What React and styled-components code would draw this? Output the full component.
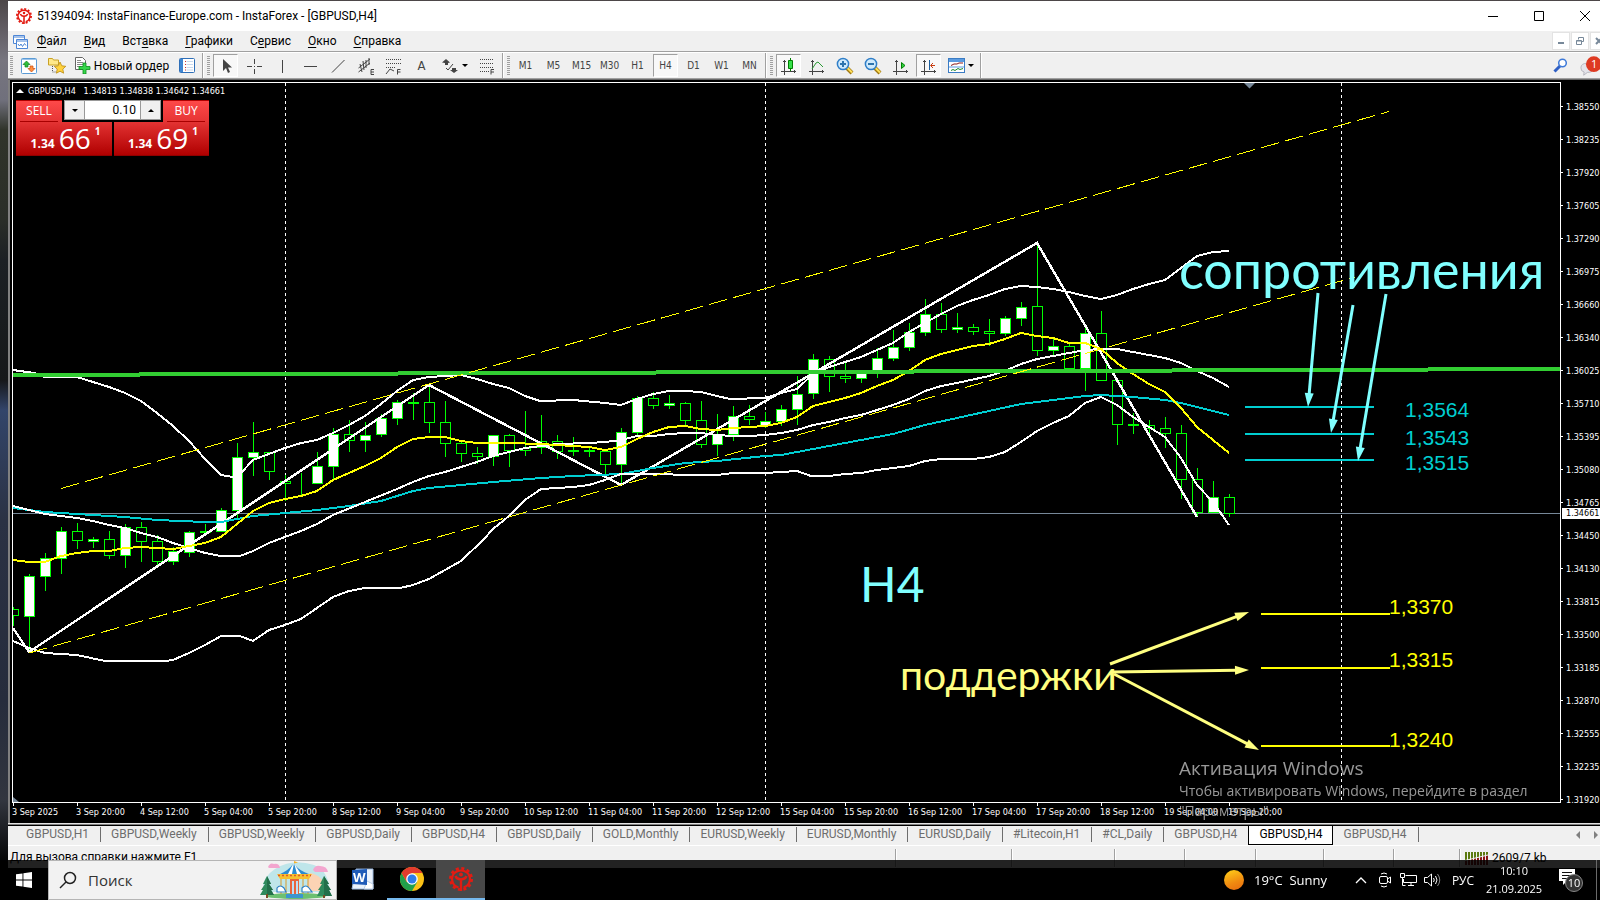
import React, { useState } from 'react';
import styled, { createGlobalStyle, css } from 'styled-components';

const windowFont = "Roboto, 'Noto Sans', sans-serif";
const uiFont = "'Open Sans', 'Noto Sans', sans-serif";
const chartFont = "'DejaVu Sans Condensed', 'DejaVu Sans', sans-serif";

const colors = {
  face: '#f0f0f0',
  shadow: '#a0a0a0',
  candle: '#00ff00',
  cyan: '#00ced1',
  yellow: '#ffff00',
  note: '#80ffff',
  noteYellow: '#ffff80',
  grey: '#778899',
};

const GlobalStyle = createGlobalStyle`
  * {
    box-sizing: border-box;
  }

  body {
    margin: 0;
    background: #000;
    font-family: ${uiFont};
    font-size: 12px;
  }

  button, input {
    font-family: inherit;
    font-size: inherit;
  }
`;

const Desktop = styled.div`
  height: 100vh;
  overflow: hidden;
  padding: 1px 0 32px 8px;
  background: linear-gradient(
    #4c4648 0, #77757f 60px, #70707c 100px, #30342a 130px, #2a2e28 220px, #1c2024 260px,
    #16181a 380px, #33456a 410px, #2b3244 520px, #262c3c 700px, #32363f 800px, #000 868px
  );
`;

const Window = styled.div`
  display: flex;
  flex-direction: column;
  height: 100%;
  margin-right: -8px;
  background: ${colors.face};
  font-family: ${windowFont};
`;

const TitleBar = styled.header`
  display: flex;
  align-items: center;
  height: 30px;
  padding-left: 8px;
  gap: 5px;
  background: #fff;
`;

const Title = styled.h1`
  flex: 1;
  margin: 0;
  font-size: 12px;
  font-weight: 400;
  color: #000;
`;

const WindowButtons = styled.div`
  display: flex;
`;

const WindowButton = styled.button`
  display: flex;
  align-items: center;
  justify-content: center;
  width: 46px;
  height: 28px;
  padding: 0;
  border: none;
  background: transparent;
`;

const MenuBar = styled.nav`
  display: flex;
  align-items: center;
  height: 22px;
  padding: 0 0 1px 5px;
  border-bottom: 1px solid #fff;
  box-shadow: inset 0 -1px 0 ${colors.shadow};
`;

const MenuItem = styled.button`
  height: 18px;
  padding: 0 8px 0 9px;
  border: none;
  background: transparent;
  font-size: 12px;
  line-height: 16px;
  color: #000;

  u {
    text-underline-offset: 2px;
  }
`;

const MdiButtons = styled.div`
  display: flex;
  gap: 1px;
  margin-left: auto;
`;

const MdiButton = styled.button`
  display: flex;
  align-items: center;
  justify-content: center;
  width: 18px;
  height: 18px;
  padding: 0;
  border: 1px solid #e3e3e3;
  background: #fff;
`;

const ToolBar = styled.div`
  display: flex;
  gap: 3px;
  height: 27px;
  padding-left: 2px;
  border-bottom: 1px solid #696969;
  box-shadow: inset 0 -1px 0 ${colors.shadow};
`;

const Grip = styled.span`
  width: 3px;
  height: 19px;
  margin-top: 3px;
  background: repeating-linear-gradient(${colors.shadow} 0 1px, transparent 1px 2px);
`;

const Separator = styled.span`
  width: 2px;
  height: 25px;
  border-left: 1px solid ${colors.shadow};
  border-right: 1px solid #fff;
`;

const ToolButton = styled.button`
  display: flex;
  align-items: center;
  justify-content: center;
  gap: 3px;
  width: ${props => props.$width || 25}px;
  height: 23px;
  margin-top: 1px;
  padding: 0;
  border: 1px solid transparent;
  background: transparent;
  color: #000;
  white-space: nowrap;

  ${props => props.$pressed && css`
    border-color: ${colors.shadow} #fff #fff ${colors.shadow};
    background: #f8f8f8;
  `}
`;

const PeriodButton = styled(ToolButton)`
  font-family: ${chartFont};
  font-size: 10px;
  color: #444;
`;

const ToolBarEnd = styled.div`
  display: flex;
  gap: 6px;
  margin-left: auto;
  padding-right: 4px;
`;

const Chart = styled.main`
  position: relative;
  display: grid;
  grid-template-columns: 1fr 47px;
  grid-template-rows: 1fr 20px;
  flex: 1;
  min-height: 0;
  padding: 2px 0 0 2px;
  border-left: 2px solid #808080;
  background: #000;
  font-family: ${chartFont};
  font-size: 9px;
  color: #fff;
`;

const Plot = styled.div`
  min-width: 0;
  min-height: 0;
  border: 1px solid #fff;

  svg {
    display: block;
    width: 100%;
    height: 100%;
  }
`;

const PriceAxis = styled.ol`
  position: relative;
  grid-row: span 2;
  margin: 0;
  padding: 8px 0 0;
  list-style: none;
`;

const Price = styled.li`
  display: flex;
  align-items: center;
  gap: 3px;
  height: 33px;

  &::before {
    content: '';
    width: 2px;
    height: 1px;
    background: #fff;
  }
`;

const LastPrice = styled.div`
  position: absolute;
  top: 426px;
  left: 1px;
  right: 0;
  padding-left: 4px;
  background: #fff;
  line-height: 11px;
  color: #000;
`;

const TimeAxis = styled.ol`
  display: flex;
  margin: 0;
  padding: 0;
  list-style: none;
`;

const Time = styled.li`
  flex: 0 0 64px;
  line-height: 12px;
  white-space: nowrap;

  &::before {
    content: '';
    display: block;
    width: 1px;
    height: 3px;
    margin-left: 1px;
    background: #fff;
  }
`;

const Quote = styled.div`
  position: absolute;
  top: 5px;
  left: 6px;
  display: flex;
  align-items: center;
  gap: 4px;
  line-height: 12px;
  white-space: pre;
`;

const TradePanel = styled.section`
  position: absolute;
  top: 20px;
  left: 6px;
  display: grid;
  grid-template-columns: 96px 95px;
  gap: 2px;
  font-family: ${uiFont};
`;

const TradeButton = styled.button`
  display: flex;
  flex-direction: column;
  align-items: ${props => (props.$side === 'buy' ? 'flex-end' : 'flex-start')};
  padding: 0;
  border: none;
  background: transparent;
  color: #fff;
`;

const TradeName = styled.span`
  width: 46px;
  height: 22px;
  padding: 0 4px;
  background: linear-gradient(#ff4a4a, #e53434);
  box-shadow: inset 0 1px 0 #b00000;
  font-size: 12px;
  line-height: 21px;

  &::after {
    content: '';
    display: block;
    height: 2px;
    border-top: 1px solid #a80000;
    background: #ff9a9a;
  }
`;

const TradePrice = styled.span`
  display: flex;
  align-items: flex-end;
  justify-content: center;
  gap: 4px;
  width: 100%;
  height: 34px;
  padding: 0 0 4px 3px;
  background: linear-gradient(#e33333, #b00000);
  border-bottom: 1px solid #900000;
  font-size: 12px;
  font-weight: 700;
  line-height: 14px;

  big {
    font-size: 28px;
    font-weight: 400;
    line-height: 25px;
  }

  sup {
    align-self: flex-start;
    margin-top: 2px;
    vertical-align: baseline;
  }
`;

const Volume = styled.div`
  position: absolute;
  top: 0;
  left: 48px;
  display: flex;
  width: 97px;
  height: 20px;
  border: 1px solid #999;
  background: #999;
  gap: 1px;
`;

const VolumeInput = styled.input`
  flex: 1;
  min-width: 0;
  padding: 0 4px 0 0;
  border: none;
  background: #fff;
  font-family: ${windowFont};
  font-size: 12px;
  text-align: right;
  color: #000;
`;

const SpinButton = styled.button`
  width: 19px;
  padding: 0 0 4px;
  border: none;
  background: ${colors.face};
`;

const Caret = styled.span`
  display: inline-block;
  border: ${props => props.$size || 3}px solid transparent;
  ${props => (props.$up ? 'border-top-width: 0; border-bottom-color' : 'border-bottom-width: 0; border-top-color')}: ${props => props.$color || '#000'};
`;

const TabBar = styled.div`
  display: flex;
  height: 23px;
  padding-left: 8px;
  border-top: 1px solid #e3e3e3;
  border-bottom: 1px solid #fff;
  box-shadow: inset 0 1px 0 #808080, inset 0 2px 0 #000;
`;

const Tab = styled.button`
  height: 15px;
  margin-top: 3px;
  padding: 0 11px 0 10px;
  border: solid #6d6d6d;
  border-width: 0 1px 0 0;
  background: transparent;
  font-size: 12px;
  line-height: 15px;
  color: #6d6d6d;
  white-space: nowrap;

  ${props => props.$active && css`
    height: 19px;
    margin: 2px 0 0 -1px;
    padding: 0 10px 2px;
    border: 1px solid #000;
    border-top: none;
    background: #fff;
    color: #000;
  `}
`;

const TabScroll = styled.div`
  display: flex;
  align-items: center;
  gap: 14px;
  margin-left: auto;
  padding-right: 9px;
`;

const StatusBar = styled.footer`
  display: flex;
  height: 22px;
  padding-left: 2px;
  font-size: 12px;
  line-height: 22px;
  color: #000;
`;

const StatusText = styled.span`
  flex: 1;
`;

const StatusCell = styled.span`
  display: flex;
  align-items: center;
  gap: 4px;
  width: ${props => props.$width}px;
  height: 18px;
  margin-top: 3px;
  padding-left: 5px;
  border-left: 1px solid ${colors.shadow};
  box-shadow: inset 1px 0 0 #fff;
`;

const Activation = styled.aside`
  position: fixed;
  right: 41px;
  bottom: 79px;
  width: 380px;
  font-size: 14px;
  line-height: 20px;
  color: rgba(190, 190, 190, 0.8);
  white-space: nowrap;
  pointer-events: none;

  h2 {
    margin: 0 0 1px;
    font-size: 19px;
    font-weight: 400;
    line-height: 24px;
  }

  p {
    margin: 0;
  }
`;

const TaskBar = styled.div`
  position: fixed;
  right: 0;
  bottom: 0;
  left: 0;
  display: flex;
  height: 40px;
  background: rgba(0, 0, 0, 0.86);
  color: #fff;
`;

const StartButton = styled.button`
  width: 48px;
  padding: 0;
  border: none;
  background: transparent;
  line-height: 0;
`;

const Search = styled.label`
  display: flex;
  align-items: center;
  width: 289px;
  padding: 0 2px 0 10px;
  border: 1px solid #b5b5b5;
  background: #f2f2f2;
`;

const SearchInput = styled.input`
  flex: 1;
  min-width: 0;
  padding: 0 0 0 11px;
  border: none;
  background: transparent;
  font-size: 15px;

  &::placeholder {
    color: #333;
    opacity: 1;
  }
`;

const TaskButton = styled.button`
  display: flex;
  align-items: center;
  justify-content: center;
  width: 49px;
  padding: 0;
  border: none;
  border-bottom: 2px solid ${props => (props.$running ? '#76b9ed' : 'transparent')};
  background: ${props => (props.$active ? '#484848' : 'transparent')};
`;

const TaskButtons = styled.div`
  display: flex;
  padding-left: 1px;
`;

const Tray = styled.div`
  display: grid;
  grid-template-columns: 132px 26px 22px 24px 24px 38px 64px 50px 4px;
  align-items: center;
  justify-items: center;
  margin-left: auto;
  font-size: 12px;
`;

const Weather = styled.div`
  display: flex;
  align-items: center;
  justify-self: start;
  gap: 10px;
  padding-left: 8px;
  font-size: 13px;
  white-space: pre;
`;

const Sun = styled.span`
  width: 20px;
  height: 20px;
  border-radius: 50%;
  background: linear-gradient(160deg, #ffd21a, #f08a10 60%, #e86a10);
`;

const Clock = styled.time`
  font-size: 11px;
  line-height: 18px;
  text-align: center;
`;

const ShowDesktop = styled.span`
  justify-self: stretch;
  height: 40px;
  border-left: 1px solid #6a6a6a;
`;

const InstaLogo = ({ size }) => (
  <svg width={size} height={size} viewBox="0 0 24 24" fill="none" stroke="#e31b12">
    <circle cx="12" cy="12" r="10.6" strokeWidth="2.8" strokeDasharray="3 2.55" />
    <path d="M9.500 20.500A8.800 8.800 0 0 1 6 5.500Q12 1.500 18 5.500A8.800 8.800 0 0 1 14.500 20.500" strokeWidth="2.2" />
    <circle cx="12" cy="7.500" r="1.900" fill="#e31b12" stroke="none" />
    <path d="M6.500 9Q7.500 12 12 12.500 16.500 12 17.500 9M12 11.500V24" strokeWidth="2.400" />
  </svg>
);

const MdiIcon = () => (
  <svg width="15" height="15" viewBox="0 0 15 15" fill="#fff" stroke="#4d86d6">
    <path d="M.5 1.500h11v8h-11zM.500 3h11" />
    <path d="M3.500 5.500h11v9h-11zM3.500 7h11" />
    <path d="M5 10l1.500 2 1.500-2 1.500 2.500 2-3 1.500 2" fill="none" />
  </svg>
);

const MarketIcon = () => (
  <svg width="16" height="16" viewBox="0 0 16 16">
    <rect x=".5" y=".5" width="15" height="15" rx="1" fill="#fff" stroke="#5b9bd5" />
    <path d="M1 1.500h14" stroke="#9cc4ec" />
    <path d="M5.500 3L9 6.500H7V9H4V6.500H2z" fill="#2fbf3a" stroke="#13801c" strokeWidth=".7" />
    <path d="M10.500 14L7 10.500h2V8h3v2.500h2z" fill="#ff9040" stroke="#c84b10" strokeWidth=".7" />
  </svg>
);

const FavoritesIcon = () => (
  <svg width="18" height="17" viewBox="0 0 18 17">
    <path d="M.5 1.500h4l1 1.500h5v5h-10z" fill="#ffe88a" stroke="#c9a227" />
    <path d="M4.500 9v6h4" stroke="#555" fill="none" strokeDasharray="1 1" />
    <path d="M12 5l1.800 3.800 4 .5-3 2.800.8 4.100-3.600-2-3.600 2 .8-4.100-3-2.800 4-.5z" fill="#ffd23e" stroke="#b98a12" strokeWidth=".8" />
  </svg>
);

const NewOrderIcon = () => (
  <svg width="17" height="17" viewBox="0 0 17 17">
    <path d="M1.500.5h7l3 3v9h-10z" fill="#fff" stroke="#666" />
    <path d="M3 3.500h4M3 5.500h6M3 7.500h6M3 9.500h4" stroke="#888" />
    <path d="M9 6h3v3.500h4v3h-4V17H9v-4.500H5v-3h4z" fill="#35d64a" stroke="#0c8a1c" strokeWidth=".8" />
  </svg>
);

const BookIcon = () => (
  <svg width="16" height="15" viewBox="0 0 16 15">
    <rect x=".5" y=".5" width="15" height="14" rx="1" fill="#fff" stroke="#2f6fb8" />
    <path d="M1 1h3v13H1z" fill="#3f86d2" />
    <path d="M6 3.500h1M6 6.500h1M6 9.500h1M6 12h1" stroke="#c33" />
    <path d="M7.500 3.500H14M7.500 6.500H14M7.500 9.500H14M7.500 12H14" stroke="#c9d9ee" />
  </svg>
);

const drawIcons = {
  cursor: <path d="M6 2v12l3-3 2 5 2-1-2-4.500h4z" fill="#444" stroke="none" />,
  cross: <path d="M9.500 2v5M9.500 12v5M2 9.500h5M12 9.500h5M9 9.500h1" />,
  vline: <path d="M9.500 3v13" />,
  hline: <path d="M3 9.500h13" />,
  trend: <path d="M3 15.500L15.500 3" />,
  channel: (
    <>
      <path d="M1.500 11L13 2M1.500 15L13 6M3 7l2 8M6 4l1 9M9 3v8M12 1v7" />
      <path d="M17 12.500h-3v5h3M14 15h3" />
    </>
  ),
  fibo: (
    <>
      <path d="M1 2.500h16M1 6.500h16M1 10.500h9" strokeDasharray="1 1" />
      <path d="M1 17l4-5 4 2M15.500 12.500h-3v5M12.500 15h3" />
    </>
  ),
  arrows: (
    <>
      <path d="M5 2l4 3.500-2 .5v2H4V6L1 5.500zM13 16l-4-3h2v-2h4v2h2z" fill="#444" stroke="none" />
      <path d="M5 11l2 2 5-6" />
    </>
  ),
  grid: (
    <>
      <path d="M2 2.500h14M2 6.500h14M2 10.500h14M2 14.500h9" strokeDasharray="1 1" />
      <path d="M16 12.500h-3v5M13 15h3" />
    </>
  ),
  candles: (
    <>
      <path d="M4.500 3v15M1 14.500h15M3 4.500h3M14.500 13v3" />
      <path d="M10.500 1v13" stroke="#008000" />
      <path d="M8.500 3.500h4v8h-4z" fill="#35e04a" stroke="#008000" />
    </>
  ),
  line: (
    <>
      <path d="M4.500 3v15M1 14.500h15M3 4.500h3M14.500 13v3" />
      <path d="M4 12l4-6 2-1 2 2 3 3" stroke="#2a9a34" />
    </>
  ),
  scroll: (
    <>
      <path d="M4.500 3v15M1 14.500h15M3 4.500h3M14.500 13v3" />
      <path d="M9.500 5.500v6l3.500-3z" fill="#2fd040" stroke="#008000" />
    </>
  ),
  shift: (
    <>
      <path d="M4.500 3v15M1 14.500h15M3 4.500h3M14.500 13v3" />
      <path d="M9.500 3v10" stroke="#1d5f9e" />
      <path d="M15 8.500h-4M13 6l-2.500 2.500L13 11" stroke="#c83c10" />
    </>
  ),
};

const DrawIcon = ({ name }) => (
  <svg width="18" height="18" viewBox="0 0 18 18" fill="none" stroke="#444">{drawIcons[name]}</svg>
);

const LetterIcon = styled.span`
  font-family: ${chartFont};
  font-size: 13px;
  color: #444;
`;

const ZoomIcon = ({ plus }) => (
  <svg width="18" height="18" viewBox="0 0 18 18">
    <path d="M10 10l6 6" stroke="#a07810" strokeWidth="4" />
    <path d="M11 10.500l5 5" stroke="#ffe05a" strokeWidth="2" />
    <circle cx="7" cy="7" r="5.600" fill="#cfeafc" stroke="#2f7ec8" strokeWidth="1.500" />
    <path d={plus ? 'M4 7h6M7 4v6' : 'M4 7h6'} stroke="#2d74ad" strokeWidth="2" />
  </svg>
);

const TemplateIcon = () => (
  <svg width="17" height="15" viewBox="0 0 17 15">
    <rect x=".5" y=".5" width="16" height="14" fill="#fff" stroke="#3b7cc4" />
    <path d="M1 1h15v3H1z" fill="#5b9be0" />
    <path d="M1 9h15" stroke="#5b9be0" />
    <path d="M3 7.500l3-1.500h3l2-1h4" stroke="#8a1a1a" fill="none" />
    <path d="M3 12.500l2-1 2 1 3-2 2 1 3-1" stroke="#1d8a2a" fill="none" />
  </svg>
);

const SearchToolIcon = () => (
  <svg width="15" height="15" viewBox="0 0 15 15">
    <path d="M1.500 13.500L7 8" stroke="#2f5fc4" strokeWidth="3" />
    <circle cx="9.500" cy="5" r="3.800" fill="#fff" stroke="#3f7ad8" strokeWidth="1.500" />
  </svg>
);

const ChatIcon = () => (
  <svg width="25" height="22" viewBox="0 0 25 22">
    <path d="M1 13q0-5 7-5t7 5-7 5l-4 3 .500-3.500Q1 17 1 13z" fill="#e4e4ea" stroke="#b4b4bc" />
    <circle cx="15" cy="9" r="8.500" fill="#de3a22" />
    <text x="12" y="13" fill="#fff" fontFamily="Open Sans, sans-serif" fontSize="12">1</text>
  </svg>
);

const Carousel = () => (
  <svg width="76" height="38" viewBox="0 0 76 38">
    <path d="M5 31Q3 17 17 8 34-3 56 4q16 7 15 27z" fill="#bfe6ea" />
    <path d="M52 12q14 2 15 18H48z" fill="#fbd3b4" />
    <path d="M10 6q2-5 6-3 5-1 6 4H11zM55 9q2-5 7-4 7 0 8 6H57z" fill="#f3a6cf" />
    <ellipse cx="38" cy="35" rx="30" ry="3" fill="#6cc070" />
    <path d="M22 13Q33 9 36 2q3 7 15 11z" fill="#fff" />
    <path d="M22 13q9-4 13-10l-5 10zM34 13l2-11 3 11zM43 13L37 4q5 6 14 9z" fill="#2b8bd0" />
    <path d="M36 0l4 1.500-4 1z" fill="#f5b32a" />
    <path d="M19 13h35l-3 5H22z" fill="#f7c12f" />
    <path d="M20 14.500h33" stroke="#e0592a" strokeWidth="1.500" strokeDasharray="2 2" />
    <path d="M32 18h9v18h-9z" fill="#e8643c" />
    <path d="M34 20h2v14h-2zM38 20h2v14h-2z" fill="#bcdff5" />
    <path d="M23 18v15M28 18v15M45 18v15M50 18v15" stroke="#d89a2c" />
    <path d="M19 27q3-4 7 0l2 4h-9zM44 27q4-4 7 0l3 4H44z" fill="#fff" stroke="#2d80c4" strokeWidth="1.200" />
    <path d="M28 33h17v4H28z" fill="#3d95cf" />
    <path d="M9 15l-4 8h2l-4 6h2l-3 5h14l-3-5h2l-4-6h2zM66 15l-4 8h2l-4 6h2l-3 6h15l-3-6h2l-4-6h2z" fill="#2f8a5c" />
    <path d="M9 15v19h7l-3-5h2l-4-6h2zM66 15v20h8l-3-6h2l-4-6h2z" fill="#236f4a" />
    <path d="M9 33v4M66 34v3" stroke="#7a4a24" strokeWidth="2" />
  </svg>
);

const WordIcon = () => (
  <svg width="23" height="22" viewBox="0 0 23 22">
    <path d="M5 1h17v20H1z" fill="#e9f1fb" stroke="#9fbbe0" />
    <path d="M16 13l6 3v5h-9z" fill="#fff" stroke="#b8cce6" />
    <path d="M1 2l15-1v16L1 16z" fill="#1f5bb8" />
    <text x="2" y="14" fill="#fff" fontFamily="Open Sans, sans-serif" fontSize="13" fontWeight="700">W</text>
  </svg>
);

const ChromeIcon = () => (
  <svg width="24" height="24" viewBox="0 0 24 24">
    <circle cx="12" cy="12" r="12" fill="#fbc116" />
    <path d="M12 12L6.800 15 1.600 6A12 12 0 0 0 12 24l5.200-9z" fill="#21a04a" />
    <path d="M1.600 6A12 12 0 0 1 22.400 6H12L6.800 15z" fill="#e33b2e" />
    <circle cx="12" cy="12" r="5.800" fill="#fff" />
    <circle cx="12" cy="12" r="4.500" fill="#2f7de8" />
  </svg>
);

// Candles are 16px apart: [high, body top, body bottom, low, rising]
const candles = [
  [607, 609, 615, 625, 0], [574, 576, 616, 652, 1], [553, 558, 576, 590, 1], [527, 531, 558, 573, 1],
  [523, 531, 540, 548, 0], [537, 539, 541, 547, 1], [531, 539, 555, 558, 0], [524, 527, 555, 567, 1],
  [522, 527, 541, 561, 0], [535, 541, 561, 566, 0], [547, 551, 561, 564, 1], [531, 532, 552, 556, 1],
  [524, 531, 532, 532, 0], [508, 510, 531, 531, 1], [443, 457, 510, 517, 1], [422, 452, 457, 475, 1],
  [452, 452, 471, 479, 0], [475, 481, 483, 500, 0], [473, 483, 483, 494, 0], [452, 466, 483, 483, 1],
  [428, 434, 466, 478, 1], [420, 434, 440, 451, 0], [422, 435, 440, 451, 1], [414, 418, 434, 436, 1],
  [400, 402, 418, 424, 1], [393, 402, 403, 419, 0], [385, 402, 422, 432, 0], [401, 422, 443, 456, 0],
  [440, 443, 453, 461, 0], [447, 453, 456, 463, 0], [435, 435, 456, 465, 1], [434, 435, 450, 466, 0],
  [411, 448, 450, 455, 0], [415, 441, 447, 453, 0], [435, 441, 451, 458, 0], [437, 450, 451, 455, 0],
  [448, 450, 451, 456, 0], [451, 451, 464, 474, 0], [428, 432, 464, 485, 1], [396, 398, 432, 435, 1],
  [392, 398, 405, 408, 0], [395, 403, 405, 408, 1], [402, 403, 420, 425, 0], [401, 420, 444, 447, 0],
  [414, 434, 444, 455, 1], [406, 416, 434, 440, 1], [405, 416, 419, 424, 0], [412, 421, 425, 427, 1],
  [405, 409, 421, 425, 1], [376, 394, 409, 424, 1], [354, 359, 393, 398, 1], [356, 359, 376, 391, 0],
  [363, 376, 378, 382, 0], [370, 372, 378, 382, 1], [348, 358, 372, 377, 1], [330, 347, 358, 360, 1],
  [323, 332, 347, 350, 1], [299, 314, 332, 335, 1], [303, 314, 329, 332, 0], [313, 327, 329, 332, 1],
  [324, 327, 331, 334, 0], [319, 331, 333, 345, 0], [316, 318, 333, 335, 1], [302, 307, 318, 325, 1],
  [243, 306, 350, 355, 0], [339, 346, 350, 354, 1], [343, 346, 368, 368, 0], [326, 333, 368, 390, 1],
  [311, 333, 380, 380, 0], [380, 380, 424, 444, 0], [413, 424, 425, 433, 0], [420, 425, 428, 437, 0],
  [417, 428, 433, 447, 0], [425, 433, 479, 498, 0], [468, 479, 512, 516, 0], [481, 497, 512, 512, 1],
  [494, 497, 513, 516, 0],
];

const lines = [
  // zigzag
  { color: '#fff', width: 2.4, points: '13,628 29,652 429,385 621,485 1037,243 1197,517' },
  // average 89
  {
    color: colors.cyan,
    points: '13,508 45,512 93,515 125,517 157,520 205,522 221,522 237,519 253,516 285,513 317,510 349,506 381,501 413,491 429,488 461,485 493,482 541,478 573,476 621,474 637,471 653,468 685,463 717,461 765,456 781,455 813,449 861,440 893,434 925,425 957,418 989,411 1021,404 1053,400 1085,396 1101,395 1133,397 1165,400 1181,403 1197,407 1229,415',
  },
  // upper band
  {
    color: '#fff',
    points: '13,370 34,373 45,377 77,377 93,382 109,387 125,393 141,401 157,413 173,426 189,441 205,459 221,475 233,477 240,474 253,460 269,454 285,448 301,443 317,440 333,433 349,425 365,416 381,404 397,391 413,380 429,377 445,376 461,375 477,379 493,384 509,388 525,396 540,401 573,400 605,403 621,405 637,399 653,394 669,391 685,391 701,392 717,396 730,399 765,398 781,393 797,389 813,374 829,367 861,357 877,350 893,343 909,332 925,323 941,314 957,306 973,300 989,295 1005,289 1021,286 1037,287 1053,289 1069,292 1085,296 1101,299 1117,295 1133,289 1149,284 1165,280 1181,268 1197,256 1213,252 1229,251',
  },
  // middle band
  {
    color: '#fff',
    points: '13,506 29,510 45,514 77,518 93,521 109,525 125,528 141,533 157,537 173,543 189,548 205,553 221,556 240,556 253,551 269,543 285,537 301,531 317,524 333,515 365,502 397,489 413,482 429,476 445,472 461,467 477,462 493,456 509,452 525,448 541,446 557,444 589,443 605,442 621,440 637,436 653,436 669,434 685,433 701,433 717,435 733,436 749,436 765,435 781,433 797,430 813,425 829,422 845,418 861,415 877,410 893,405 909,399 925,391 941,386 957,383 989,376 1005,371 1021,364 1037,359 1053,356 1069,353 1085,350 1101,349 1117,349 1133,352 1149,355 1165,358 1181,363 1197,371 1213,378 1229,387',
  },
  // lower band
  {
    color: '#fff',
    points: '13,641 29,648 45,653 77,655 105,661 165,661 173,660 189,653 205,645 221,636 240,636 253,641 269,630 285,625 301,619 317,608 333,597 349,591 365,588 400,588 413,585 429,579 445,570 461,561 483,540 493,529 509,516 525,500 541,489 573,487 589,485 605,480 621,474 660,474 685,475 717,475 733,473 765,473 797,471 811,476 829,476 845,474 861,473 877,470 893,468 909,466 925,461 941,459 973,459 989,457 1005,452 1021,442 1037,431 1053,423 1069,416 1085,403 1101,397 1117,405 1133,417 1149,427 1165,437 1181,458 1197,485 1213,502 1229,525',
  },
  // average 21
  {
    color: colors.yellow,
    points: '13,560 29,562 45,562 61,556 77,553 93,551 109,551 125,548 141,547 173,549 189,546 205,543 221,537 237,524 253,511 269,503 285,499 301,496 317,491 333,480 349,473 365,466 381,458 397,447 413,439 429,437 445,437 461,441 477,443 509,443 541,444 557,445 589,447 605,450 621,447 637,439 653,432 669,427 685,426 701,429 717,430 733,428 765,426 781,423 797,417 813,406 829,402 845,398 861,393 877,386 893,380 909,371 925,360 941,354 957,350 973,346 989,344 1005,339 1021,333 1037,336 1053,338 1069,343 1085,343 1101,349 1117,363 1133,374 1149,384 1165,392 1181,408 1197,427 1213,440 1229,453',
  },
];

const levels = [
  { label: '1,3564', color: colors.cyan, x1: 1245, x2: 1374, y: 407, textX: 1405, textY: 417 },
  { label: '1,3543', color: colors.cyan, x1: 1245, x2: 1374, y: 434, textX: 1405, textY: 445 },
  { label: '1,3515', color: colors.cyan, x1: 1245, x2: 1374, y: 460, textX: 1405, textY: 470 },
  { label: '1,3370', color: colors.yellow, x1: 1261, x2: 1390, y: 614, textX: 1389, textY: 614 },
  { label: '1,3315', color: colors.yellow, x1: 1261, x2: 1390, y: 668, textX: 1389, textY: 667 },
  { label: '1,3240', color: colors.yellow, x1: 1261, x2: 1390, y: 746, textX: 1389, textY: 747 },
];

const arrows = [
  { color: colors.note, from: [1318, 293], to: [1308, 407] },
  { color: colors.note, from: [1353, 305], to: [1331, 433] },
  { color: colors.note, from: [1386, 294], to: [1358, 461] },
  { color: colors.noteYellow, from: [1110, 664], to: [1249, 612] },
  { color: colors.noteYellow, from: [1112, 672], to: [1249, 670] },
  { color: colors.noteYellow, from: [1114, 674], to: [1259, 750] },
];

const Arrow = ({ color, from, to }) => {
  const dx = to[0] - from[0];
  const dy = to[1] - from[1];
  const length = Math.hypot(dx, dy);
  const angle = (Math.atan2(dy, dx) * 180) / Math.PI;

  return (
    <g transform={`translate(${from[0]} ${from[1]}) rotate(${angle})`} fill={color}>
      <path d={`M0-1.500H${length - 12}v3H0z`} />
      <path d={`M${length} 0l-14 4.500v-9z`} />
    </g>
  );
};

const PlotDrawing = () => (
  <svg viewBox="13 83 1547 719" preserveAspectRatio="xMaxYMid slice">
    <g fill="none" stroke="#fff" strokeDasharray="3 3" shapeRendering="crispEdges">
      {[285, 765, 1341].map(x => <path key={x} d={`M${x}.5 83V802`} />)}
    </g>
    <path d="M13 513.500H1560" stroke={colors.grey} shapeRendering="crispEdges" />
    <g shapeRendering="crispEdges" stroke={colors.candle}>
      {candles.map(([high, top, bottom, low, rising], i) => {
        const x = 13 + i * 16;
        return (
          <g key={x}>
            <path d={`M${x}.5 ${high}V${low + 1}`} />
            <rect x={x - 4.5} y={top + 0.5} width="10" height={bottom - top} fill={rising ? '#fff' : '#000'} />
          </g>
        );
      })}
    </g>
    <g fill="none" shapeRendering="crispEdges">
      {lines.map(line => (
        <polyline key={line.points} stroke={line.color} strokeWidth={line.width || 2} points={line.points} />
      ))}
    </g>
    <path d="M13 375L1560 369" stroke="#32cd32" strokeWidth="4" shapeRendering="crispEdges" />
    <g stroke={colors.yellow} strokeDasharray="18.7 6.25" shapeRendering="crispEdges">
      <path d="M61 488.500L1389 111.500" />
      <path d="M29 653L1355 277" />
    </g>
    <path d="M1244 83h11l-5.500 5.500zM13 797l6 5h-6z" fill={colors.grey} />
    {levels.map(level => (
      <g key={level.label}>
        <path d={`M${level.x1} ${level.y}H${level.x2}`} stroke={level.color} strokeWidth="2" />
        <text x={level.textX} y={level.textY} fill={level.color} fontFamily="Liberation Sans, sans-serif" fontSize="21">
          {level.label}
        </text>
      </g>
    ))}
    <g fontFamily="Lato, Open Sans, sans-serif">
      <text x="1179" y="289" fill={colors.note} fontSize="52">сопротивления</text>
      <text x="860" y="602" fill={colors.note} fontSize="48">H4</text>
      <text x="900" y="690" fill={colors.noteYellow} fontSize="41">поддержки</text>
    </g>
    {arrows.map(arrow => <Arrow key={arrow.to.join()} {...arrow} />)}
  </svg>
);

const prices = [
  '1.38550', '1.38235', '1.37920', '1.37605', '1.37290', '1.36975', '1.36660', '1.36340',
  '1.36025', '1.35710', '1.35395', '1.35080', '1.34765', '1.34450', '1.34130', '1.33815',
  '1.33500', '1.33185', '1.32870', '1.32555', '1.32235', '1.31920',
];

const times = [
  '3 Sep 2025', '3 Sep 20:00', '4 Sep 12:00', '5 Sep 04:00', '5 Sep 20:00', '8 Sep 12:00', '9 Sep 04:00',
  '9 Sep 20:00', '10 Sep 12:00', '11 Sep 04:00', '11 Sep 20:00', '12 Sep 12:00', '15 Sep 04:00',
  '15 Sep 20:00', '16 Sep 12:00', '17 Sep 04:00', '17 Sep 20:00', '18 Sep 12:00', '19 Sep 04:00', '19 Sep 20:00',
];

const tabs = [
  'GBPUSD,H1', 'GBPUSD,Weekly', 'GBPUSD,Weekly', 'GBPUSD,Daily', 'GBPUSD,H4', 'GBPUSD,Daily',
  'GOLD,Monthly', 'EURUSD,Weekly', 'EURUSD,Monthly', 'EURUSD,Daily', '#Litecoin,H1', '#CL,Daily',
  'GBPUSD,H4', 'GBPUSD,H4', 'GBPUSD,H4',
];

const menu = [
  ['', 'Ф', 'айл'], ['', 'В', 'ид'], ['Вст', 'а', 'вка'], ['', 'Г', 'рафики'],
  ['С', 'е', 'рвис'], ['', 'О', 'кно'], ['', 'С', 'правка'],
];

const periods = ['M1', 'M5', 'M15', 'M30', 'H1', 'H4', 'D1', 'W1', 'MN'];

const TradeTile = ({ side, pips }) => (
  <TradeButton $side={side}>
    <TradeName>{side.toUpperCase()}</TradeName>
    <TradePrice>1.34<big>{pips}</big><sup>1</sup></TradePrice>
  </TradeButton>
);

const App = () => {
  const [period, setPeriod] = useState('H4');
  const [activeTab, setActiveTab] = useState(13);
  const [volume, setVolume] = useState('0.10');

  const stepVolume = step => setVolume(Math.max(0.01, Number(volume) + step).toFixed(2));

  return (
    <>
      <GlobalStyle />
      <Desktop>
        <Window>
          <TitleBar>
            <InstaLogo size={16} />
            <Title>51394094: InstaFinance-Europe.com - InstaForex - [GBPUSD,H4]</Title>
            <WindowButtons>
              <WindowButton aria-label="Свернуть">
                <svg width="10" height="10" stroke="#000"><path d="M0 5.500h10" /></svg>
              </WindowButton>
              <WindowButton aria-label="Развернуть">
                <svg width="10" height="10" fill="none" stroke="#000"><path d="M.5.500h9v9h-9z" /></svg>
              </WindowButton>
              <WindowButton aria-label="Закрыть">
                <svg width="10" height="10" stroke="#000"><path d="M0 0l10 10M10 0L0 10" /></svg>
              </WindowButton>
            </WindowButtons>
          </TitleBar>

          <MenuBar>
            <MdiIcon />
            {menu.map(([before, key, after]) => (
              <MenuItem key={key + after}>{before}<u>{key}</u>{after}</MenuItem>
            ))}
            <MdiButtons>
              <MdiButton aria-label="Свернуть окно">
                <svg width="8" height="8" stroke={colors.grey} strokeWidth="2"><path d="M1 6h6" /></svg>
              </MdiButton>
              <MdiButton aria-label="Восстановить окно">
                <svg width="8" height="8" fill="none" stroke={colors.grey}><path d="M2.500 2.500V.500h5v4h-2M.500 3.500h5v4h-5zM.500 4h5" /></svg>
              </MdiButton>
              <MdiButton aria-label="Закрыть окно">
                <svg width="8" height="8" stroke={colors.grey} strokeWidth="2"><path d="M1 1l6 6M7 1L1 7" /></svg>
              </MdiButton>
            </MdiButtons>
          </MenuBar>

          <ToolBar>
            <Grip />
            <ToolButton aria-label="Обзор рынка"><MarketIcon /></ToolButton>
            <ToolButton aria-label="Навигатор"><FavoritesIcon /></ToolButton>
            <ToolButton $width={99}><NewOrderIcon />Новый ордер</ToolButton>
            <ToolButton aria-label="Терминал"><BookIcon /></ToolButton>
            <Separator />
            <Grip />
            <ToolButton $pressed aria-label="Курсор"><DrawIcon name="cursor" /></ToolButton>
            <ToolButton aria-label="Перекрестие"><DrawIcon name="cross" /></ToolButton>
            <ToolButton aria-label="Вертикальная линия"><DrawIcon name="vline" /></ToolButton>
            <ToolButton aria-label="Горизонтальная линия"><DrawIcon name="hline" /></ToolButton>
            <ToolButton aria-label="Трендовая линия"><DrawIcon name="trend" /></ToolButton>
            <ToolButton aria-label="Канал"><DrawIcon name="channel" /></ToolButton>
            <ToolButton aria-label="Фибоначчи"><DrawIcon name="fibo" /></ToolButton>
            <ToolButton aria-label="Текст"><LetterIcon>A</LetterIcon></ToolButton>
            <ToolButton $width={34} aria-label="Стрелки"><DrawIcon name="arrows" /><Caret /></ToolButton>
            <ToolButton aria-label="Сетка"><DrawIcon name="grid" /></ToolButton>
            <Separator />
            <Grip />
            {periods.map(name => (
              <PeriodButton key={name} $pressed={name === period} onClick={() => setPeriod(name)}>{name}</PeriodButton>
            ))}
            <Separator />
            <Grip />
            <ToolButton $pressed aria-label="Свечи"><DrawIcon name="candles" /></ToolButton>
            <ToolButton aria-label="Линия"><DrawIcon name="line" /></ToolButton>
            <ToolButton aria-label="Увеличить"><ZoomIcon plus /></ToolButton>
            <ToolButton aria-label="Уменьшить"><ZoomIcon /></ToolButton>
            <ToolButton aria-label="Автопрокрутка"><DrawIcon name="scroll" /></ToolButton>
            <ToolButton $pressed aria-label="Сдвиг графика"><DrawIcon name="shift" /></ToolButton>
            <ToolButton $width={33} aria-label="Шаблоны"><TemplateIcon /><Caret /></ToolButton>
            <Separator />
            <ToolBarEnd>
              <ToolButton aria-label="Поиск"><SearchToolIcon /></ToolButton>
              <ToolButton aria-label="Сообщения"><ChatIcon /></ToolButton>
            </ToolBarEnd>
          </ToolBar>

          <Chart>
            <Plot><PlotDrawing /></Plot>
            <PriceAxis>
              {prices.map(price => <Price key={price}>{price}</Price>)}
              <LastPrice>1.34661</LastPrice>
            </PriceAxis>
            <TimeAxis>
              {times.map(time => <Time key={time}>{time}</Time>)}
            </TimeAxis>
            <Quote><Caret $up $color="#fff" $size={4} />GBPUSD,H4   1.34813 1.34838 1.34642 1.34661</Quote>
            <TradePanel>
              <TradeTile side="sell" pips="66" />
              <TradeTile side="buy" pips="69" />
              <Volume>
                <SpinButton aria-label="Меньше" onClick={() => stepVolume(-0.01)}><Caret /></SpinButton>
                <VolumeInput aria-label="Объём" value={volume} onChange={e => setVolume(e.target.value)} />
                <SpinButton aria-label="Больше" onClick={() => stepVolume(0.01)}><Caret $up /></SpinButton>
              </Volume>
            </TradePanel>
          </Chart>

          <TabBar>
            {tabs.map((tab, index) => (
              <Tab key={index} $active={index === activeTab} onClick={() => setActiveTab(index)}>{tab}</Tab>
            ))}
            <TabScroll>
              <svg width="5" height="8" fill="#808080"><path d="M5 0v8L1 4z" /></svg>
              <svg width="5" height="8" fill="#808080"><path d="M0 0v8l4-4z" /></svg>
            </TabScroll>
          </TabBar>

          <StatusBar>
            <StatusText>Для вызова справки нажмите F1</StatusText>
            <StatusCell $width={116} />
            <StatusCell $width={103} />
            <StatusCell $width={70} />
            <StatusCell $width={71} />
            <StatusCell $width={68} />
            <StatusCell $width={70} />
            <StatusCell $width={66} />
            <StatusCell $width={149}>
              <svg width="23" height="13" fill="none">
                <path d="M0 4.500h23" stroke="#5c7a10" strokeWidth="9" strokeDasharray="2 1" />
                <path d="M0 9L23 3v10H0z" fill="#8a1515" />
                <path d="M2.500 0v13M5.500 0v13M8.500 0v13M11.500 0v13M14.500 0v13M17.500 0v13M20.500 0v13" stroke="#f0f0f0" />
                <path d="M0 8.500L23 3" stroke="#f0f0f0" />
              </svg>
              2609/7 kb
            </StatusCell>
          </StatusBar>
        </Window>
      </Desktop>

      <Activation>
        <h2>Активация Windows</h2>
        <p>Чтобы активировать Windows, перейдите в раздел<br />"Параметры".</p>
      </Activation>

      <TaskBar>
        <StartButton aria-label="Пуск">
          <svg width="16" height="16" fill="#fff"><path d="M0 2.300L6.500 1.400v6.200H0zM7.400 1.200L16 0v7.600H7.400zM0 8.400h6.500v6.200L0 13.700zM7.400 8.400H16V16l-8.600-1.200z" /></svg>
        </StartButton>
        <Search>
          <svg width="18" height="18" fill="none" stroke="#222" strokeWidth="1.500"><circle cx="11" cy="7" r="5.500" /><path d="M7 11l-6 6" /></svg>
          <SearchInput placeholder="Поиск" aria-label="Поиск" />
          <Carousel />
        </Search>
        <TaskButtons>
          <TaskButton aria-label="Word"><WordIcon /></TaskButton>
          <TaskButton $running aria-label="Chrome"><ChromeIcon /></TaskButton>
          <TaskButton $running $active aria-label="InstaForex"><InstaLogo size={24} /></TaskButton>
        </TaskButtons>
        <Tray>
          <Weather><Sun />19°C  Sunny</Weather>
          <svg width="12" height="8" fill="none" stroke="#fff" strokeWidth="1.300"><path d="M1 7l5-5 5 5" /></svg>
          <svg width="14" height="16" fill="none" stroke="#fff"><rect x="1.500" y="4.500" width="8" height="7" rx="1.500" /><path d="M9.500 7l3-2v6l-3-2M3 2q3-2 6 0M3 14q3 2 6 0" /></svg>
          <svg width="17" height="14" fill="none" stroke="#fff"><path d="M5.500 2.500h11v7H3.500V6M8 12.500h6M11 9.500v3M.500.500h4v4h-4zM2.500 4.500v8h3" /></svg>
          <svg width="17" height="14" fill="none" stroke="#fff"><path d="M.500 4.500h3l4-3.500v12l-4-3.500h-3zM9.500 5q1.500 2 0 4M11.500 3q3 4 0 8" /><path d="M13.500 1q4.500 6 0 12" stroke="#888" /></svg>
          <span>РУС</span>
          <Clock>10:10<br />21.09.2025</Clock>
          <svg width="26" height="24" viewBox="0 0 26 24">
            <path d="M1 1h16v12H9l-4 4v-4H1z" fill="#fff" />
            <path d="M4 4.500h10M4 7.500h10M4 10.500h7" stroke="#111" />
            <circle cx="16" cy="15" r="8.500" fill="#333" stroke="#888" />
            <text x="16" y="19" fill="#fff" fontFamily="Open Sans, sans-serif" fontSize="11" textAnchor="middle">10</text>
          </svg>
          <ShowDesktop />
        </Tray>
      </TaskBar>
    </>
  );
};

export default App;
